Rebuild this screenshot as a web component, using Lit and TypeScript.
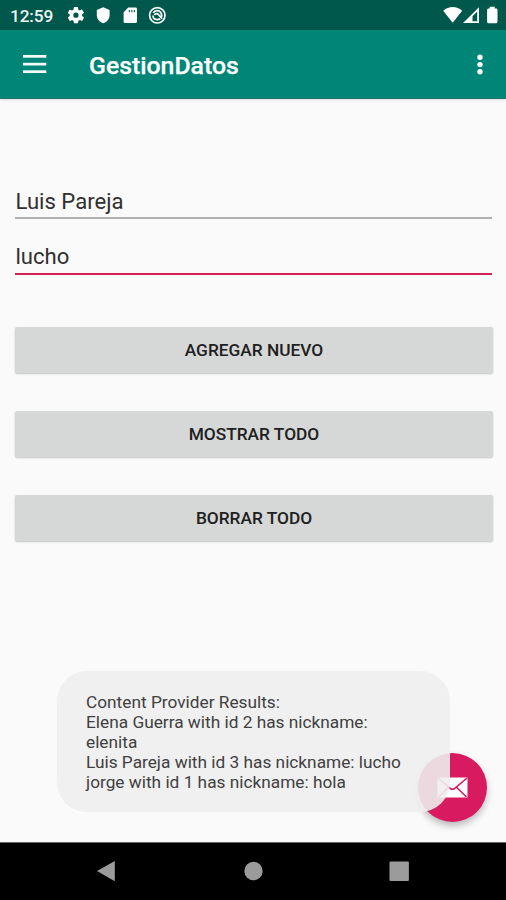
import { LitElement, html, css, svg } from "lit";
import { customElement } from "lit/decorators.js";

@customElement("status-bar")
class StatusBar extends LitElement {
  static styles = css`
    :host { display: flex; height: 30px; background: #00574b; color: #fff; align-items: center; box-sizing: border-box; }
    .time { font: 500 17.300px/30px Roboto, sans-serif; letter-spacing: -.15px; margin-left: 10px; width: 58px; padding-top: 1px; box-sizing: border-box; height: 30px; white-space: nowrap; color: #eef5f4; }
    .icons { display: block; flex: none; }
    .spacer { flex: 1; }
  `;
  render() {
    return html`
      <span class="time">12:59</span>
      <svg class="icons" width="104" height="30" viewBox="68 0 104 30" fill="#fff">
        <g transform="translate(66.1 5.4) scale(.82)">
          <path d="M19.400 13c0-.3.1-.6.1-1s0-.7-.1-1l2.100-1.600c.2-.2.2-.4.100-.6l-2-3.500c-.1-.2-.4-.3-.6-.2l-2.500 1c-.5-.4-1.100-.7-1.700-1l-.4-2.600c0-.2-.2-.4-.5-.4h-4c-.2 0-.4.200-.5.400l-.4 2.700c-.6.200-1.100.600-1.700 1l-2.500-1c-.2-.1-.5 0-.6.200l-2 3.500c-.1.200-.1.500.1.600L4.500 11c0 .3-.1.600-.1 1s0 .700.1 1l-2.100 1.600c-.2.200-.2.400-.1.600l2 3.500c.1.200.4.300.6.200l2.500-1c.5.400 1.100.700 1.700 1l.4 2.600c0 .2.200.400.500.400h4c.2 0 .5-.2.500-.4l.4-2.700c.6-.2 1.100-.6 1.700-1l2.500 1c.2.100.5 0 .6-.2l2-3.500c.1-.2.1-.5-.1-.6L19.400 13zM12 15.200a3.200 3.200 0 1 1 0-6.400 3.200 3.200 0 0 1 0 6.400z"/>
        </g>
        <path d="M103.200 7.300l6.400 2.600v5.300c0 3.700-2.700 6.800-6.400 8.100-3.700-1.300-6.400-4.400-6.400-8.100V9.900z"/>
        <path fill-rule="evenodd" d="M128.300 7.600h7.200c.8 0 1.500.7 1.500 1.500v12.400c0 .8-.7 1.500-1.500 1.500h-10.400c-.8 0-1.500-.7-1.500-1.500V12.300zM128.800 10v2.200h1.100V10zm2.500 0v2.200h1.100V10zm2.500 0v2.200h1.100V10z"/>
        <g fill="none" stroke="#fff">
          <circle cx="157.300" cy="15.300" r="7.700" stroke-width="1.700"/>
          <path stroke-width="1.700" d="M153.200 12.900c1.800-2.700 5.600-3 7.500-.5 1.200 1.600 1.200 3.600.3 5.300M152.900 15.500c.2 2.700 2.300 4.200 4.600 4.100 1.100-.1 1.900-.4 2.600-.9M154.300 14.800c1.700-1.600 3.200-1.500 4.300-.1l3.400 4"/>
        </g>
      </svg>
      <span class="spacer"></span>
      <svg class="icons" width="66" height="30" viewBox="440 0 66 30" fill="#fff">
        <path d="M443.200 10.700C448.600 5.700 456.800 5.700 462.200 10.700L452.700 22.800z"/>
        <path fill-rule="evenodd" d="M463 23L479 7.200V23zM472.500 21.300h4.700V11.500l-4.700 4.700z"/>
        <path d="M489.700 6.700h5v1.700h1.300c.9 0 1.500.6 1.500 1.500v11.800c0 .9-.6 1.500-1.500 1.500h-7.400c-.9 0-1.500-.6-1.500-1.500V9.900c0-.9.600-1.500 1.500-1.500h1.100z"/>
      </svg>
    `;
  }
}

@customElement("app-bar")
class AppBar extends LitElement {
  static styles = css`
    :host { display: flex; align-items: center; height: 69px; box-sizing: border-box; background: #008577; border-bottom: 1px solid #197064; box-shadow: 0 1px 3px rgba(0,0,0,.12); padding: 0 20px 0 23px; }
    .icon { display: block; flex: none; }
    .title { flex: 1; margin: 0 0 0 42px; padding-top: 3px; font: 500 24.800px/30px Roboto, sans-serif; color: #fff; -webkit-text-stroke: .25px #fff; }
  `;
  render() {
    return html`
      <svg class="icon" width="24" height="24" viewBox="0 0 24 24" fill="#f6fbfa">
        <rect x="0" y="3" width="23.300" height="2.700"/><rect x="0" y="10.800" width="23.300" height="2.700"/><rect x="0" y="18.300" width="23.300" height="2.700"/>
      </svg>
      <h1 class="title">GestionDatos</h1>
      <svg class="icon" width="12" height="24" viewBox="0 0 12 24" fill="#fff">
        <circle cx="6" cy="5.300" r="2.700"/><circle cx="6" cy="12.600" r="2.700"/><circle cx="6" cy="19.800" r="2.700"/>
      </svg>
    `;
  }
}

@customElement("nav-bar")
class NavBar extends LitElement {
  static styles = css`
    :host { display: flex; justify-content: space-between; align-items: center; height: 58px; box-sizing: border-box; background: #000; border-top: 1px solid #666; padding: 0 96px 2px 96px; }
    .key { display: block; }
  `;
  render() {
    const key = (shape: unknown) => html`<svg class="key" width="22" height="22" viewBox="0 0 22 22" fill="#9b9b9b">${shape}</svg>`;
    return html`
      ${key(svg`<path d="M1 11L18.800 1V21.200z"/>`)}
      ${key(svg`<circle cx="11.500" cy="11" r="9.200"/>`)}
      ${key(svg`<rect x="1.500" y="1.500" width="19.400" height="19.400" rx="1"/>`)}
    `;
  }
}

@customElement("app-root")
class AppRoot extends LitElement {
  static styles = css`
    :host { display: flex; flex-direction: column; position: relative; width: 506px; height: 900px; overflow: hidden; background: #fafafa; font-family: Roboto, sans-serif; }
    .content { flex: 1; display: flex; flex-direction: column; padding: 85px 14px 0 15px; }
    .field { height: 35px; box-sizing: border-box; border-bottom: 2px solid #b0b0b0; font-size: 22.100px; line-height: 34px; color: #303030; white-space: nowrap; text-indent: .5px; }
    .field.focused { margin-top: 21px; border-color: #d32355; line-height: 32px; }
    .buttons { display: flex; flex-direction: column; gap: 38px; margin: 52px -1px 0 0; }
    .button { height: 46px; border: 0; padding: 0; border-radius: 2px; background: #d6d8d7; box-shadow: 0 1px 2px rgba(0,0,0,.22); color: #202020; font: 500 17.300px/46px Roboto, sans-serif; text-align: center; }
    .fab { position: absolute; left: 418px; top: 753px; width: 69px; height: 69px; border-radius: 50%; background: #d81b60; box-shadow: 0 4px 7px rgba(0,0,0,.26); display: flex; align-items: center; justify-content: center; }
    .mail { display: block; }
    .toast { position: absolute; left: 57px; top: 671px; width: 393px; height: 141px; box-sizing: border-box; border-radius: 30px; background: rgba(238,238,238,.9); padding: 21px 29px; font-size: 17.280px; line-height: 20.100px; color: #404040; white-space: pre; }
  `;
  render() {
    const lines = [
      "Content Provider Results:",
      "Elena Guerra with id 2 has nickname:",
      "elenita",
      "Luis Pareja with id 3 has nickname: lucho",
      "jorge with id 1 has nickname: hola",
    ];
    return html`
      <status-bar></status-bar>
      <app-bar></app-bar>
      <main class="content">
        <div class="field">Luis Pareja</div>
        <div class="field focused">lucho</div>
        <div class="buttons">
          ${["AGREGAR NUEVO", "MOSTRAR TODO", "BORRAR TODO"].map((t) => html`<button class="button">${t}</button>`)}
        </div>
      </main>
      <div class="fab">
        <svg class="mail" width="31" height="21" viewBox="0 0 31 21">
          <rect x=".5" y=".5" width="30" height="20" fill="#fff"/>
          <path d="M1 1L13.500 11.500Q15.500 13 17.500 11.500L30 1M1.500 20L11.500 10.200M29.500 20L19.500 10.200" fill="none" stroke="#d81b60" stroke-width="1.600"/>
        </svg>
      </div>
      <div class="toast">${lines.join("\n")}</div>
      <nav-bar></nav-bar>
    `;
  }
}
